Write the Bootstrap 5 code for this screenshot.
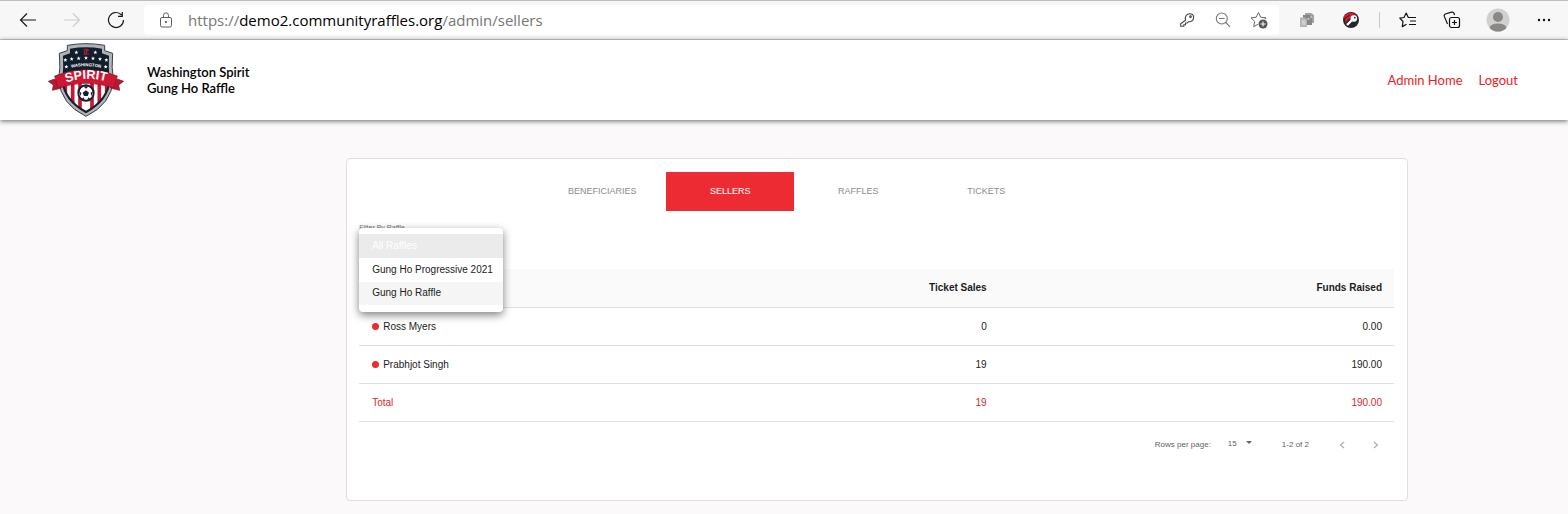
<!DOCTYPE html>
<html lang="en">
<head>
<meta charset="utf-8">
<meta name="viewport" content="width=device-width, initial-scale=1">
<title>Sellers - Washington Spirit Gung Ho Raffle</title>
<link href="https://cdn.jsdelivr.net/npm/bootstrap@5.3.0/dist/css/bootstrap.min.css" rel="stylesheet">
<style>
  :root { --brand: #ed2b33; --line: #dedfdf; }
  body { background: #fbf9fa; font-family: "Liberation Sans", Arial, sans-serif; font-size: 10px; line-height: 14px; color: #1c1c1c; }

  /* browser toolbar */
  .toolbar { height: 40px; background: #f7f7f7; border-top: 1px solid #bdbdbd; border-bottom: 1px solid #d0d0d0; padding: 0 16px 0 20px; }
  .tool-btn { background: none; border: 0; padding: 0; width: 16px; height: 16px; display: flex; align-items: center; justify-content: center; flex: none; color: #1b1b1b; }
  .tool-btn svg { display: block; flex: none; }
  .tool-btn.muted { color: #cdcdcd; }
  .tool-btn.profile { margin: 0 2px; }
  .nav-tools { gap: 28px; width: 124px; }
  .address { height: 30px; background: #fff; border-radius: 4px; padding: 0 12px 0 15px; }
  .url { font: 15px/20px "Open Sans", "Noto Sans", sans-serif; color: #767676; margin-left: 15px; outline: 0; white-space: nowrap; }
  .url b { font-weight: 400; color: #000; }
  .address-tools { gap: 20px; color: #555; }
  .ext-tools { gap: 28px; padding-left: 20px; }
  .tool-sep { width: 1px; height: 16px; background: #c8c8c8; margin: 0 -8px; }

  /* site header */
  .site-head { height: 80px; background: #fff; padding: 0 50px 0 48px; box-shadow: 0 1px 5px rgba(0,0,0,.6); position: relative; font-family: Lato, sans-serif; }
  .site-name { font-size: 13px; line-height: 16px; font-weight: 600; color: #000; margin-left: 23px; }
  .site-link { font-size: 13px; line-height: 20px; color: #ec1c24; text-decoration: none; }

  /* sellers panel */
  .page-wrap { padding: 38px 160px 13px; }
  .panel { width: calc(85% + 1px); margin-left: auto; background: #fff; border: 1px solid var(--line); border-radius: 4px; padding: 13px 13px 36px 12px; }
  .tab-row { padding-left: 179px; }
  .tab-btn { width: 128px; height: 39px; border: 0; border-radius: 0; background: none; color: #8c8c8c; font-size: 9px; line-height: 12px; padding: 0 0 2px; text-align: center; }
  .tab-btn.active { background: var(--brand); color: #fff; }
  .filter { position: relative; height: 58px; padding-top: 11px; }
  .filter-label { font-size: 7px; line-height: 12px; color: #757575; display: block; }
  .filter-menu { display: block; top: 17px; left: 0; width: 144px; min-width: 0; padding: 6px 0 7px; border: 0; border-radius: 4px; font-size: 10px; box-shadow: 0 3px 9px rgba(0,0,0,.5); }
  .filter-menu .dropdown-item { padding: 5px 10px 5px 13px; line-height: 14px; color: #212121; }
  .filter-menu .dropdown-item.active { background: #ebebeb; color: #fff; }
  .filter-menu .hovered { background: #f5f5f5; padding-top: 4px; }

  .sellers { width: 100%; table-layout: fixed; border-collapse: collapse; }
  .sellers th, .sellers td { height: 38px; padding: 0 12px 0 13px; border-bottom: 1px solid var(--line); vertical-align: middle; }
  .sellers td { padding-top: 2px; }
  .sellers thead th { background: #fafafa; font-weight: 700; }
  .c-name { width: 35%; } .c-sales { width: 26.8%; }
  .sellers tfoot td { color: #d9272f; }
  .dot { display: inline-block; width: 7px; height: 7px; border-radius: 50%; background: var(--brand); margin-right: 4px; }

  .pager { height: 38px; margin-top: 4px; padding-right: 12px; font-size: 8px; line-height: 12px; color: #5f5f5f; }
  .rows-select { width: 27px; border: 0; padding: 0 0 2px; font-size: 8px; line-height: 12px; color: #5f5f5f; appearance: none; outline: 0;
    background: url("data:image/svg+xml,%3Csvg xmlns='http://www.w3.org/2000/svg' viewBox='0 0 6 3'%3E%3Cpath d='M0 0h6L3 3z' fill='%23666'/%3E%3C/svg%3E") no-repeat right 3px top 3px / 6px 3px; margin: 0 27px 0 17px; }
  .page-nav { gap: 22px; margin-left: 27px; }
  .page-btn { border: 0; background: none; padding: 0; width: 12px; height: 12px; display: flex; align-items: center; justify-content: center; }
</style>
</head>
<body>

<div class="toolbar d-flex align-items-center">
  <div class="nav-tools d-flex align-items-center">
    <button class="tool-btn" aria-label="Back"><svg width="18" height="16" viewBox="0 0 18 16" fill="none" stroke="currentColor" stroke-width="1.2"><path d="M17 8H1.5M8 1.500L1.500 8L8 14.500"/></svg></button>
    <button class="tool-btn muted" aria-label="Forward"><svg width="18" height="16" viewBox="0 0 18 16" fill="none" stroke="currentColor" stroke-width="1.2"><path d="M1 8h15.500M10 1.500L16.500 8L10 14.500"/></svg></button>
    <button class="tool-btn" aria-label="Refresh"><svg width="18" height="18" viewBox="0 0 18 18" fill="none" stroke="currentColor" stroke-width="1.2"><path d="M16.500 9A7.500 7.500 0 1 1 14.600 4M15.300 1v4.300H11"/></svg></button>
  </div>
  <div class="address d-flex align-items-center flex-grow-1">
    <svg width="14" height="16" viewBox="0 0 14 16" fill="none" stroke="#5e5e5e"><rect x="1.500" y="5.500" width="11" height="9.500" rx="1.500"/><path d="M4.500 5.500V3.500a2.500 2.700 0 0 1 5 0v2"/><circle cx="7" cy="10" r=".7" fill="#333"/></svg>
    <div class="url flex-grow-1" role="textbox" aria-label="Address" contenteditable="true">https://<b>demo2.communityraffles.org</b>/admin/sellers</div>
    <div class="address-tools d-flex align-items-center">
      <button class="tool-btn" aria-label="Passwords"><svg width="16" height="16" viewBox="0 0 16 16" fill="none" stroke="#444" stroke-width="1.100"><path d="M6.500 8.200C5.600 4.500 7.800 1.700 10.600 1.700c2.400 0 4 1.600 4 3.800 0 2.800-2.400 4.700-5.200 4.200L8.200 11H6.500v1.700H4.800v1.600H1.700v-2.500z"/><circle cx="11.500" cy="4.700" r=".8"/></svg></button>
      <button class="tool-btn" aria-label="Zoom out"><svg width="16" height="16" viewBox="0 0 16 16" fill="none" stroke="#777" stroke-width="1.100"><circle cx="6.800" cy="6.500" r="5.500"/><path d="M10.800 10.500L15 14.800M4 6.500h5.600"/></svg></button>
      <button class="tool-btn" aria-label="Add to favorites"><svg width="18" height="18" viewBox="0 0 18 18"><path d="M8.500 1.500L10.700 6.200L16 6.900L12.100 10.400L13 15.600L8.500 13L3.700 15.700L4.700 10.400L1 6.900L6.200 6.200Z" fill="none" stroke="#666" stroke-linejoin="round"/><circle cx="13" cy="13" r="5.200" fill="#fff"/><circle cx="13" cy="13" r="4.500" fill="#555"/><path d="M13 10.500v5M10.500 13h5" stroke="#fff"/></svg></button>
    </div>
  </div>
  <div class="ext-tools d-flex align-items-center">
    <button class="tool-btn" aria-label="Documents extension"><svg width="16" height="16" viewBox="0 0 16 16"><path d="M6 1h6l3 2v8H6z" fill="#a2a2a2"/><path d="M4 3h7l2 2v8H4z" fill="#868686"/><path d="M1 5.500h5l2 2V15H1z" fill="#b5b5b5"/><path d="M3 8h2.500l1 1v4H3z" fill="#cfcfcf"/><path d="M8.500 6h2v2h-2zM11.500 4h1.500v2h-1.500z" fill="#c4c4c4"/></svg></button>
    <button class="tool-btn" aria-label="Password extension"><svg width="18" height="18" viewBox="0 0 18 18"><circle cx="9" cy="9" r="8" fill="#25252d"/><path d="M1.500 6C4 2 8 1 12 2.500L15 5L9 6L3 12Q4 8 1.500 6" fill="#d8192d"/><path d="M2 8l6-4" stroke="#25252d"/><path d="M10.500 8.500L5 14" stroke="#fff" stroke-width="2.400"/><circle cx="11.800" cy="7.500" r="3.300" fill="#fff"/><circle cx="12.800" cy="6.700" r=".9" fill="#25252d"/></svg></button>
    <span class="tool-sep"></span>
    <button class="tool-btn" aria-label="Favorites"><svg width="18" height="16" viewBox="0 0 18 16" fill="none" stroke="#111" stroke-width="1.200" stroke-linejoin="round"><path d="M10.500 5.500H9.300L7.200 1L5 5.500L.8 6.100L4 9.500L3.300 14.600L7.500 12.300M10.500 5.500H17M11 9h6M10 12.500h7"/></svg></button>
    <button class="tool-btn" aria-label="Collections"><svg width="18" height="18" viewBox="0 0 18 18" fill="none" stroke="#111" stroke-width="1.200"><rect x="6.500" y="6.500" width="10" height="10" rx="2"/><path d="M11.500 9v5M9 11.500h5M4.500 13L1.300 5.400A2 2 0 0 1 2.300 3L8.500 1.200A2 2 0 0 1 11 2.300L11.600 4"/></svg></button>
    <button class="tool-btn profile" aria-label="Profile"><svg width="24" height="24" viewBox="0 0 24 24"><defs><clipPath id="face"><circle cx="12" cy="12" r="11.500"/></clipPath></defs><circle cx="12" cy="12" r="11.500" fill="#d2d0ce"/><g clip-path="url(#face)" fill="#8a8886"><circle cx="12" cy="9" r="5"/><ellipse cx="12" cy="20" rx="8.500" ry="4.500"/></g></svg></button>
    <button class="tool-btn" aria-label="Settings and more"><svg width="14" height="4" viewBox="0 0 14 4" fill="#111"><circle cx="2" cy="2" r="1.200"/><circle cx="7" cy="2" r="1.200"/><circle cx="12" cy="2" r="1.200"/></svg></button>
  </div>
</div>

<header class="site-head d-flex align-items-center">
  <svg width="76" height="74" viewBox="24 15 228 222" role="img" aria-label="Washington Spirit crest">
    <defs>
      <clipPath id="crest"><path d="M90 32Q138 24 186 32V46L207 53Q205 90 209 125Q204 187 138 222Q72 187 67 125Q71 90 69 53L90 46Z"/></clipPath>
      <path id="arc" d="M73 136Q138 111 205 132"/>
      <path id="arc2" d="M86 91Q138 78 190 91"/>
      <path id="star" d="M0-6L1.700-1.900L6-1.900L2.600 1L3.800 5.500L0 2.900L-3.800 5.500L-2.600 1L-6-1.900L-1.700-1.900Z"/>
    </defs>
    <path d="M82 22Q138 12 194 22V38L218 46Q214 90 220 125Q214 199 138 235Q62 199 56 125Q62 90 58 46L82 38Z" fill="#b0b3b7" stroke="#39404a" stroke-width="3"/>
    <path d="M90 32Q138 24 186 32V46L207 53Q205 90 209 125Q204 187 138 222Q72 187 67 125Q71 90 69 53L90 46Z" fill="#121e2c"/>
    <g clip-path="url(#crest)">
      <path d="M60 120H216Q208 188 138 222Q68 188 60 120" fill="#fff"/>
      <path d="M76 120v90M98 120v100M120 120v110M156 120v110M178 120v100M200 120v90" stroke="#ca1731" stroke-width="11"/>
    </g>
    <path d="M67 125Q72 187 138 222Q204 187 209 125" fill="none" stroke="#121e2c" stroke-width="6"/>
    <g fill="#fff">
      <use href="#star" x="109" y="43"/><use href="#star" x="166" y="43"/>
      <use href="#star" x="76" y="66"/><use href="#star" x="95" y="63"/><use href="#star" x="116" y="61"/><use href="#star" x="138" y="60"/><use href="#star" x="159" y="61"/><use href="#star" x="180" y="63"/><use href="#star" x="199" y="66"/>
      <use href="#star" x="79" y="86"/><use href="#star" x="197" y="86"/>
    </g>
    <path d="M131 34h13v3h-6v13h-5V37M147 38h-7v10h7" fill="none" stroke="#b01f3c" stroke-width="3"/>
    <path d="M44 123L25 130L40 141L37 157L63 151L72 133M232 123L251 130L236 141L239 157L213 151L204 133" fill="#bd172f" stroke="#681c2b" stroke-width="2"/>
    <path d="M44 114Q138 76 232 114L222 150Q138 122 54 150Z" fill="#cc1832" stroke="#721c2c" stroke-width="2"/>
    <circle cx="138" cy="165" r="23" fill="#fff" stroke="#141f2c" stroke-width="6"/>
    <path d="M138 157l9 7-4 10h-11l-4-10zM130 145h16l-8 7zM117 160l7 4-2 11zM159 160l-7 4 2 11zM126 183l5-5 3 8zM150 183l-5-5-3 8z" fill="#141f2c"/>
    <g fill="#fff" font-family="Liberation Sans, sans-serif" font-weight="700" text-anchor="middle">
      <text font-size="13"><textPath href="#arc2" startOffset="50%">WASHINGTON</textPath></text>
      <text font-size="38"><textPath href="#arc" startOffset="50%">SPIRIT</textPath></text>
    </g>
  </svg>
  <div class="site-name">Washington Spirit<br>Gung Ho Raffle</div>
  <nav class="d-flex gap-3 ms-auto">
    <a class="site-link" href="#">Admin Home</a>
    <a class="site-link" href="#">Logout</a>
  </nav>
</header>

<main class="page-wrap">
  <section class="panel">
    <div class="tab-row d-flex" role="tablist">
      <button class="tab-btn" role="tab">BENEFICIARIES</button>
      <button class="tab-btn active" role="tab" aria-selected="true">SELLERS</button>
      <button class="tab-btn" role="tab">RAFFLES</button>
      <button class="tab-btn" role="tab">TICKETS</button>
    </div>

    <div class="filter">
      <span class="filter-label" id="filter-label">Filter By Raffle</span>
      <div class="dropdown-menu show filter-menu" role="listbox" aria-labelledby="filter-label">
        <button class="dropdown-item active" role="option" aria-selected="true">All Raffles</button>
        <button class="dropdown-item" role="option">Gung Ho Progressive 2021</button>
        <button class="dropdown-item hovered" role="option">Gung Ho Raffle</button>
      </div>
    </div>

    <table class="sellers">
      <colgroup><col class="c-name"><col class="c-sales"><col></colgroup>
      <thead><tr><th></th><th class="text-end">Ticket Sales</th><th class="text-end">Funds Raised</th></tr></thead>
      <tbody>
        <tr><td><span class="dot"></span>Ross Myers</td><td class="text-end">0</td><td class="text-end">0.00</td></tr>
        <tr><td><span class="dot"></span>Prabhjot Singh</td><td class="text-end">19</td><td class="text-end">190.00</td></tr>
      </tbody>
      <tfoot><tr><td>Total</td><td class="text-end">19</td><td class="text-end">190.00</td></tr></tfoot>
    </table>

    <div class="pager d-flex align-items-center justify-content-end">
      <label for="rows">Rows per page:</label>
      <select class="rows-select" id="rows"><option>15</option></select>
      <span>1-2 of 2</span>
      <div class="page-nav d-flex">
        <button class="page-btn" aria-label="Previous page"><svg width="6" height="8" viewBox="0 0 6 8" fill="none" stroke="#b0b0b0" stroke-width="1.300"><path d="M5 1L1.500 4L5 7"/></svg></button>
        <button class="page-btn" aria-label="Next page"><svg width="6" height="8" viewBox="0 0 6 8" fill="none" stroke="#b0b0b0" stroke-width="1.300"><path d="M1 1l3.500 3L1 7"/></svg></button>
      </div>
    </div>
  </section>
</main>

<script src="https://cdn.jsdelivr.net/npm/bootstrap@5.3.0/dist/js/bootstrap.bundle.min.js"></script>
</body>
</html>
